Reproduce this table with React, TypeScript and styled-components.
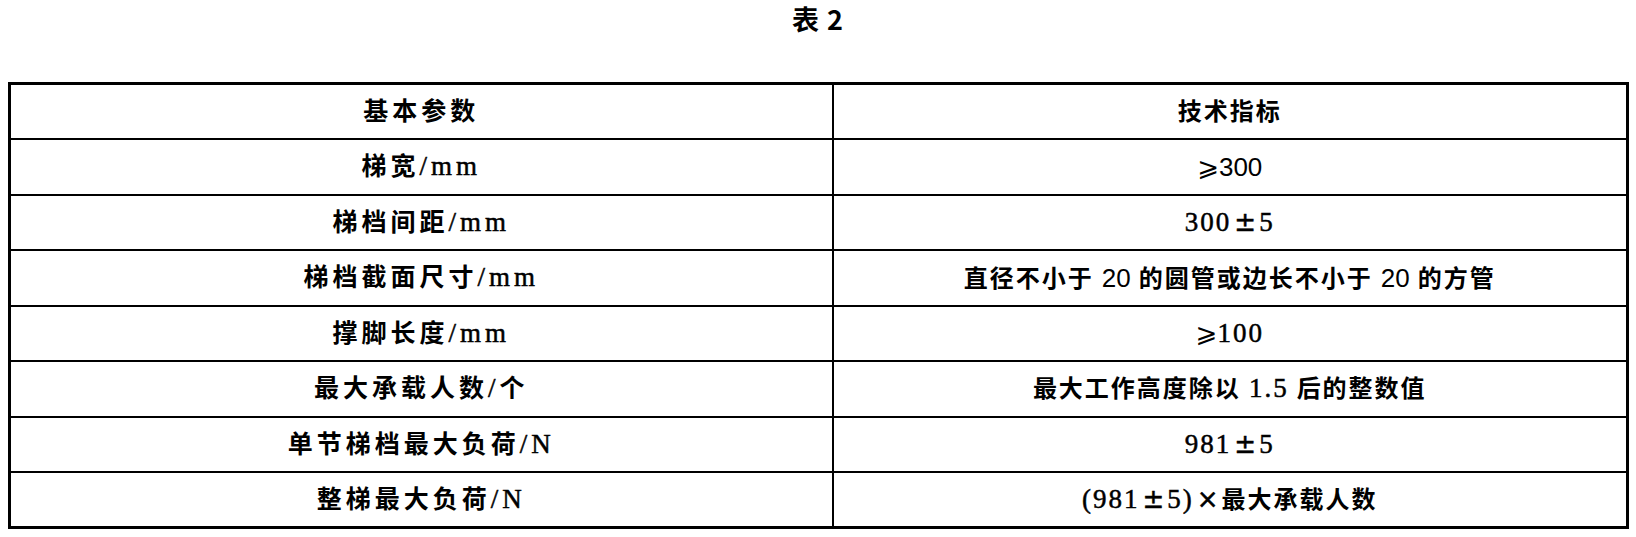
import React from 'react';
import styled, { createGlobalStyle } from 'styled-components';

const GlobalStyle = createGlobalStyle`
	html, body {
		margin: 0;
		padding: 0;
		background: #fff;
	}
	body {
		font-family: "Liberation Serif", "Noto Sans CJK SC", serif;
		color: #000;
	}
`;

const Page = styled.div`
	width: 1636px;
	height: 537px;
	overflow: hidden;
	display: flex;
	flex-direction: column;
`;

const Caption = styled.h1`
	margin: 0;
	height: 82px;
	padding-top: 0;
	box-sizing: border-box;
	text-align: center;
	font-family: "Noto Sans CJK SC", sans-serif;
	font-weight: 700;
	font-size: 27px;
	line-height: 38px;
	letter-spacing: 1px;
`;

const Table = styled.table`
	margin-left: 8px;
	width: 1621px;
	border-collapse: collapse;
	border: 3px solid #000;
	table-layout: fixed;
`;

const Row = styled.tr`
	height: 55.5px;
`;

const Cell = styled.td<{ $side: 'left' | 'right' }>`
	padding: 0;
	text-align: center;
	vertical-align: middle;
	border-bottom: 2.5px solid #000;
	border-right: ${(p) => (p.$side === 'left' ? '2px solid #000' : 'none')};
	font-size: ${(p) => (p.$side === 'left' ? '25px' : '24px')};
	font-weight: 700;
	letter-spacing: ${(p) => (p.$side === 'left' ? '4px' : '2px')};
	line-height: 1;
	white-space: nowrap;
`;

/* latin parts of a cell: a serif, a little larger than the CJK text */
const Latin = styled.span`
	font-family: "Liberation Serif", serif;
	font-size: 27px;
	font-weight: 400;
	-webkit-text-stroke: 0.5px #000;
`;

const Sym = styled.span<{ $gap?: number }>`
	font-family: "DejaVu Sans", "Noto Sans CJK SC", sans-serif;
	font-weight: 400;
	font-size: 26px;
	letter-spacing: 0;
	padding: 0 ${(p) => p.$gap ?? 0}px;
`;

const Narrow = styled.span`
	font-family: "Liberation Sans Narrow", "Liberation Sans", sans-serif;
	font-weight: 400;
	font-size: 26px;
	letter-spacing: 0;
`;

const rows: { name: React.ReactNode; value: React.ReactNode }[] = [
	{
		name: <>梯宽<Latin>/mm</Latin></>,
		value: <><Sym>⩾</Sym><Narrow>300</Narrow></>,
	},
	{
		name: <>梯档间距<Latin>/mm</Latin></>,
		value: <Latin>300<Sym $gap={3}>±</Sym>5</Latin>,
	},
	{
		name: <>梯档截面尺寸<Latin>/mm</Latin></>,
		value: <>直径不小于 <Narrow>20</Narrow> 的圆管或边长不小于 <Narrow>20</Narrow> 的方管</>,
	},
	{
		name: <>撑脚长度<Latin>/mm</Latin></>,
		value: <><Sym>⩾</Sym><Latin>100</Latin></>,
	},
	{
		name: <>最大承载人数<Latin>/</Latin>个</>,
		value: <>最大工作高度除以 <Latin>1.5</Latin> 后的整数值</>,
	},
	{
		name: <>单节梯档最大负荷<Latin>/N</Latin></>,
		value: <Latin>981<Sym $gap={3}>±</Sym>5</Latin>,
	},
	{
		name: <>整梯最大负荷<Latin>/N</Latin></>,
		value: <><Latin>(981<Sym $gap={3}>±</Sym>5)<Sym $gap={3}>×</Sym></Latin>最大承载人数</>,
	},
];

const App: React.FC = () => (
	<>
		<GlobalStyle />
		<Page>
			<Caption>表 2</Caption>
			<Table>
				<colgroup>
					<col style={{ width: 823 }} />
					<col />
				</colgroup>
				<tbody>
					<Row>
						<Cell $side="left">基本参数</Cell>
						<Cell $side="right">技术指标</Cell>
					</Row>
					{rows.map((r, i) => (
						<Row key={i}>
							<Cell $side="left">{r.name}</Cell>
							<Cell $side="right">{r.value}</Cell>
						</Row>
					))}
				</tbody>
			</Table>
		</Page>
	</>
);

export default App;
